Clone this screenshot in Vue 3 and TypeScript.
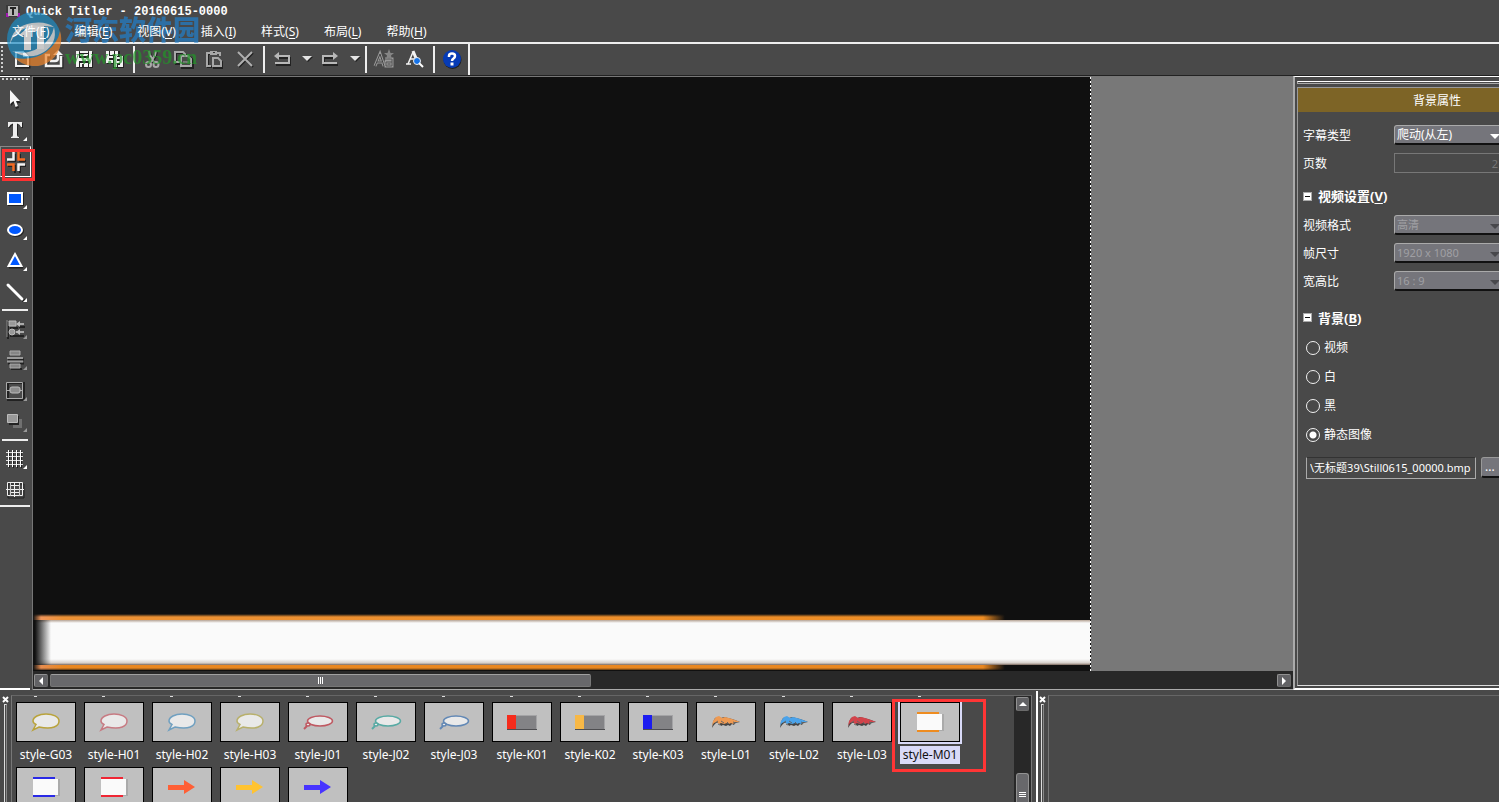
<script setup lang="ts">
import { onMounted, ref } from 'vue'

interface Menu { label: string; key: string }
interface Tool { name: string; icon: string; more?: boolean; off?: boolean }
interface Style { name: string; kind: 'bubble' | 'callout' | 'bar' | 'brush' | 'frame' | 'arrow'; color: string }

const menus: Menu[] = [
  { label: '文件', key: 'F' },
  { label: '编辑', key: 'E' },
  { label: '视图', key: 'V' },
  { label: '插入', key: 'I' },
  { label: '样式', key: 'S' },
  { label: '布局', key: 'L' },
  { label: '帮助', key: 'H' },
]

const caret = '<path d="M2 8h10l-5 5z" fill="#222"/><path d="M1 7h10l-5 5z" fill="#e4e4e4"/>'

const toolbar: Tool[][] = [
  [
    { name: '新建', icon: '<path d="M4 3h8l4 4v10H4z" fill="none" stroke="#222" stroke-width="3" transform="translate(1 1)"/><path d="M4 3h7l5 5v9H4z" fill="#4b4b4b" stroke="#f2f2f2" stroke-width="2"/><path d="M11 2l6 6h-6z" fill="#f2f2f2"/>' },
    { name: '打开', icon: '<path d="M7 7H3v10h15V7" fill="none" stroke="#222" stroke-width="3" transform="translate(1 1)"/><path d="M7 6H3v11h15V7" fill="none" stroke="#f2f2f2" stroke-width="2.500"/><path d="M7 12h5q3 0 3-3V5" fill="none" stroke="#f2f2f2" stroke-width="2.500"/><path d="M10 6l5-5 5 5z" fill="#f2f2f2"/>' },
    { name: '保存', icon: '<path d="M3 3h16v16H3z" fill="#222"/><path d="M2 2h3v16H2zM15 2h3v16h-3zM2 9h16v3H2zM6 2h8v2H6zM6 5h8v2H6zM6 14h8v4H6z" fill="#f2f2f2"/><path d="M8 15h2v3H8z" fill="#333"/>' },
    { name: '另存为', icon: '<path d="M2 2h13v13H2z" fill="#222"/><path d="M1 2h3v12H1zM10 2h3v6h-3zM1 7h9v2H1zM5 2h4v4H5zM4 11h4v3H4z" fill="#f2f2f2"/><path d="M8 7h11v12H8z" fill="#222"/><path d="M9 7h3v11H9zM15 7h3v11h-3zM9 12h9v2H9zM12 8h3v2h-3zM13 16h2v2h-2z" fill="#f2f2f2"/>' },
  ],
  [
    { name: '剪切', icon: '<path d="M8 3l1 4 4 7M15 3l-1 4-4 7" fill="none" stroke="#222" stroke-width="2"/><path d="M7 2l1 4 4 7M14 2l-1 4-4 7" fill="none" stroke="#aaa" stroke-width="2"/><circle cx="6.500" cy="15.500" r="2.500" fill="none" stroke="#aaa" stroke-width="2"/><circle cx="14" cy="15.500" r="2.500" fill="none" stroke="#aaa" stroke-width="2"/>' },
    { name: '复制', icon: '<path d="M3 4h8l2 2v9H3zM9 8h8l3 3v8H9z" fill="none" stroke="#222" stroke-width="2"/><path d="M2 3h8l2 2v8H2z" fill="none" stroke="#a8a8a8" stroke-width="2"/><path d="M8 7h7l3 3v7H8z" fill="#494949" stroke="#a8a8a8" stroke-width="2"/><path d="M10 13h6" stroke="#777" stroke-width="2"/>' },
    { name: '粘贴', icon: '<g transform="translate(-1 0)"><path d="M9 18H5V5h3M11 10h5l3 3v6h-8z" fill="none" stroke="#222" stroke-width="2"/><path d="M8 17H4V4h3M14 4h3v3" fill="none" stroke="#a8a8a8" stroke-width="2"/><path d="M7 2h7v4H7z" fill="#a8a8a8"/><path d="M10 3h2v1h-2z" fill="#333"/><path d="M10 9h5l3 3v5h-8z" fill="#494949" stroke="#a8a8a8" stroke-width="2"/></g>' },
    { name: '删除', icon: '<path d="M4 4l14 14M18 4L4 18" stroke="#222" stroke-width="2"/><path d="M3 3l14 14M17 3L3 17" stroke="#b0b0b0" stroke-width="2"/>' },
  ],
  [
    { name: '撤消', icon: '<path d="M5 9h13v7H4" fill="none" stroke="#222" stroke-width="2"/><path d="M5 7h12v7H3" fill="none" stroke="#b8b8b8" stroke-width="2"/><path d="M7 3v8L2 7z" fill="#b8b8b8"/>' },
    { name: '撤消列表', icon: caret },
    { name: '恢复', icon: '<path d="M15 9H4v7h14" fill="none" stroke="#222" stroke-width="2"/><path d="M15 7H3v7h14" fill="none" stroke="#b8b8b8" stroke-width="2"/><path d="M13 3v8l5-4z" fill="#b8b8b8"/>' },
    { name: '恢复列表', icon: caret },
  ],
  [
    { name: '字体样式', icon: '<path d="M1 17L6 5l4 12M3 13h5" fill="none" stroke="#999" stroke-width="3"/><path d="M1 17L6 5l4 12M3 13h5" fill="none" stroke="#444" stroke-width="1"/><path d="M11 10h7v7h-6v-4h6" fill="none" stroke="#999" stroke-width="3"/><path d="M11 10h7v7h-6v-4h6" fill="none" stroke="#555" stroke-width="1"/><path d="M15 0l1.500 4H20l-3 2.500 1 4-3-2-3 2 1-4L10 4h3.500z" fill="#858585"/>' },
    { name: '预览', icon: '<path d="M3 15L8 3M5 10h6" fill="none" stroke="#f4f4f4" stroke-width="1.500"/><path d="M8 2l5 12" stroke="#f4f4f4" stroke-width="3"/><path d="M1 15h5" stroke="#f4f4f4" stroke-width="1.500"/><circle cx="12" cy="12" r="3.500" fill="#1673e8" stroke="#eee"/><path d="M14 14l4 4" stroke="#fff" stroke-width="2"/>' },
  ],
  [
    { name: '帮助', icon: '<circle cx="10.500" cy="11" r="9" fill="#202020"/><circle cx="10" cy="10" r="9" fill="#063bb5"/><path d="M7 8V7q0-2.500 3-2.500T13 7q0 1.500-1.500 2.500T10 12" fill="none" stroke="#fff" stroke-width="2.500"/><path d="M8.500 13.500h3v3h-3z" fill="#fff"/>' },
  ],
]

const tools: Tool[][] = [
  [
    { name: '选择', icon: '<path d="M6 2v14l3-3 2 6 3-1-2-5h4z" fill="#222"/><path d="M5 0v14l3.500-3 2 6 2.500-1-2-5H15z" fill="#f6f6f6"/>' },
    { name: '文字', more: true, icon: '<path d="M4 2h14v5h-1q-1-3-4-3v11l2 2H7l2-2V4Q6 4 5 7H4z" fill="#222"/><path d="M3 1h14v5h-1q-1-3-4-3.500V14q0 2 2 2v1H6v-1q2 0 2-2V2.500Q5 3 4 6H3z" fill="#eee"/>' },
    { name: '图像', icon: '<path d="M2 9h7V2M20 14h-6v7M20 9h-6V2M2 14h7v7" fill="none" stroke="#222" stroke-width="2"/><path d="M1 7.500h6.500V0M19 12.500h-6.500V19" fill="none" stroke="#f4f4f4" stroke-width="2.500"/><path d="M19 7.500h-6.500V0M1 12.500h6.500V19" fill="none" stroke="#f46a22" stroke-width="2.500"/>' },
  ],
  [
    { name: '矩形', more: true, icon: '<path d="M3 4h16v13H3z" fill="#222"/><path d="M3 4h14v11H3z" fill="#0058ff" stroke="#fff" stroke-width="2"/>' },
    { name: '椭圆', more: true, icon: '<ellipse cx="11" cy="11" rx="8" ry="6" fill="#222"/><ellipse cx="10" cy="10" rx="7" ry="5" fill="#0058ff" stroke="#fff" stroke-width="2"/>' },
    { name: '三角形', more: true, icon: '<path d="M11 4l7 13H4z" fill="#222" stroke="#222"/><path d="M10 3l6.500 12h-13z" fill="#0058ff" stroke="#fff" stroke-width="2"/>' },
    { name: '直线', more: true, icon: '<path d="M4 4l15 15" stroke="#111" stroke-width="3"/><path d="M3 3l14 14" stroke="#fff" stroke-width="3" stroke-linecap="round"/>' },
  ],
  [
    { name: '对齐', more: true, off: true, icon: '<path d="M3 3v17M5 9h8M5 17h14M14 8h6" stroke="#222" stroke-width="2"/><path d="M2 1v17" stroke="#888"/><path d="M14 5h5M11 13h8" stroke="#aaa" stroke-width="2"/><path d="M4 2h7v5H4z" fill="#999" stroke="#bbb"/><circle cx="7" cy="13" r="3" fill="#999" stroke="#bbb"/><path d="M15 2v6l-4-3zM15 10v6l-4-3z" fill="#bbb"/>' },
    { name: '分布', more: true, off: true, icon: '<path d="M3 9.500h16M3 13.500h16M6 19h11" stroke="#222" stroke-width="2"/><path d="M2 8h16M2 11.500h16" stroke="#999" stroke-width="2"/><path d="M5 1h10v4H5zM5 14h10v4H5z" fill="#858585" stroke="#aaa"/>' },
    { name: '居中', more: true, off: true, icon: '<path d="M3 2h16v17H3z" fill="none" stroke="#222" stroke-width="2"/><path d="M1.500 1.500h16v16h-16zM2 9.500h16" fill="none" stroke="#aaa"/><rect x="5" y="6" width="10" height="6" rx="2" fill="#8c8c8c" stroke="#bbb"/>' },
    { name: '顺序', more: true, off: true, icon: '<path d="M8 7h9v9H8z" fill="#707070"/><path d="M4 4h10v9H4z" fill="#222"/><path d="M2.500 2.500h10v8h-10z" fill="#999" stroke="#bbb"/>' },
  ],
  [
    { name: '网格', more: true, icon: '<path d="M4.500 2v17M8.500 2v17M12.500 2v17M16.500 2v17" stroke="#222"/><path d="M1 3.500h17M1 7.500h17M1 11.500h17M1 15.500h17" stroke="#ddd"/><path d="M3.500 1v17M7.500 1v17M11.500 1v17M15.500 1v17" stroke="#fff"/>' },
    { name: '安全区', icon: '<path d="M3 4h16v14H3z" fill="none" stroke="#222"/><path d="M2.500 2.500h15v13h-15zM5.500 5.500h9v7h-9zM1 9.500h18M9.500 2v15" fill="none" stroke="#f0f0f0"/><path d="M5.500 3v13M14.500 3v13" stroke="#ccc"/>' },
  ],
]

const styles: Style[] = [
  { name: 'style-G03', kind: 'bubble', color: '#b9a33c' },
  { name: 'style-H01', kind: 'bubble', color: '#c77b83' },
  { name: 'style-H02', kind: 'bubble', color: '#70a0c0' },
  { name: 'style-H03', kind: 'bubble', color: '#b8b06c' },
  { name: 'style-J01', kind: 'callout', color: '#bf5962' },
  { name: 'style-J02', kind: 'callout', color: '#58aaa4' },
  { name: 'style-J03', kind: 'callout', color: '#6288b5' },
  { name: 'style-K01', kind: 'bar', color: '#f52c1c' },
  { name: 'style-K02', kind: 'bar', color: '#f7b846' },
  { name: 'style-K03', kind: 'bar', color: '#1c1cf0' },
  { name: 'style-L01', kind: 'brush', color: '#ee9a53' },
  { name: 'style-L02', kind: 'brush', color: '#4ba3ea' },
  { name: 'style-L03', kind: 'brush', color: '#d2444b' },
  { name: 'style-M01', kind: 'frame', color: '#ee8c20' },
  { name: '', kind: 'frame', color: '#2929e6' },
  { name: '', kind: 'frame', color: '#ef2634' },
  { name: '', kind: 'arrow', color: '#ff5f35' },
  { name: '', kind: 'arrow', color: '#ffc331' },
  { name: '', kind: 'arrow', color: '#4834ff' },
]
const selected = ref('style-M01')

const videoRows = [
  { id: 'format', label: '视频格式', value: '高清' },
  { id: 'frame', label: '帧尺寸', value: '1920 x 1080' },
  { id: 'aspect', label: '宽高比', value: '16 : 9' },
]
const backgrounds = ['视频', '白', '黑', '静态图像']
const background = ref('静态图像')
const pages = ref('2')
const file = ref('育\\无标题39\\Still0615_00000.bmp')
const fileBox = ref<HTMLInputElement | null>(null)

// Show the end of the path, where the file name is.
onMounted(() => {
  if (fileBox.value) fileBox.value.scrollLeft = fileBox.value.scrollWidth
})
</script>

<template>
  <div class="app">
    <header class="title">
      <svg class="app-icon" viewBox="0 0 14 12"><path d="M0 0h14v12H0z" fill="#3a3a3a" /><path d="M0 8h3v4H0zM11 8h3v4h-3z" fill="#a01ab0" /><path d="M2 1h10v10H2z" fill="#b5b5b5" /><path d="M4 2h6v2H8v6H6V4H4z" fill="#222" /></svg>
      <h1>Quick Titler - 20160615-0000</h1>
    </header>
    <nav class="menu">
      <button v-for="m in menus" :key="m.key" type="button">{{ m.label }}(<u>{{ m.key }}</u>)</button>
    </nav>
    <div class="toolbar" role="toolbar">
      <i class="grip-v"></i>
      <div v-for="(g, i) in toolbar" :key="i" class="group">
        <button v-for="t in g" :key="t.name" type="button" :class="{ drop: t.name.endsWith('列表') }" :aria-label="t.name">
          <svg :viewBox="t.name.endsWith('列表') ? '0 0 10 20' : '0 0 20 20'" v-html="t.icon"></svg>
        </button>
      </div>
    </div>

    <main class="work">
      <aside class="tools">
        <i class="grip-h"></i>
        <div v-for="(g, i) in tools" :key="i" class="tool-group">
          <button v-for="t in g" :key="t.name" type="button" :class="{ active: t.name === '图像' }" :aria-label="t.name">
            <svg viewBox="0 0 20 20" v-html="t.icon"></svg>
            <span v-if="t.more" class="more" :class="{ off: t.off }"></span>
          </button>
        </div>
      </aside>

      <section class="editor">
        <div class="view">
          <div class="stage">
            <div class="ticker">
              <div class="rule top"></div>
              <div class="band"></div>
              <div class="rule bottom"></div>
            </div>
          </div>
          <div class="outside"></div>
        </div>
        <div class="hscroll">
          <button type="button" class="sbtn" aria-label="向左"><svg viewBox="0 0 12 12"><path d="M8 2v8L4 6z" fill="#fff" /></svg></button>
          <div class="htrack"><div class="hthumb"><i></i><i></i><i></i></div></div>
          <button type="button" class="sbtn" aria-label="向右"><svg viewBox="0 0 12 12"><path d="M4 2v8l4-4z" fill="#fff" /></svg></button>
        </div>
      </section>

      <aside class="props">
        <i class="prop-grip"></i>
        <div class="sheet">
          <h2>背景属性</h2>
          <form @submit.prevent>
            <div class="row">
              <label for="kind">字幕类型</label>
              <span class="pick"><select id="kind"><option>爬动(从左)</option></select><i></i></span>
            </div>
            <div class="row">
              <label for="pages">页数</label>
              <input id="pages" v-model="pages" class="pages" disabled />
            </div>
            <h3><i></i>视频设置(<u>V</u>)</h3>
            <div v-for="r in videoRows" :key="r.id" class="row">
              <label :for="r.id">{{ r.label }}</label>
              <span class="pick disabled"><select :id="r.id" disabled><option>{{ r.value }}</option></select><i></i></span>
            </div>
            <h3 class="second"><i></i>背景(<u>B</u>)</h3>
            <label v-for="b in backgrounds" :key="b" class="radio">
              <input v-model="background" type="radio" name="background" :value="b" />{{ b }}
            </label>
            <div class="file">
              <input ref="fileBox" v-model="file" aria-label="图像文件" />
              <button type="button">...</button>
            </div>
          </form>
        </div>
      </aside>
    </main>

    <footer class="docks">
      <section class="dock styles">
        <div class="handle">
          <button type="button" aria-label="关闭"><svg viewBox="0 0 7 7"><path d="M1 1l5 5M6 1L1 6" stroke="#fff" stroke-width="2" /></svg></button>
          <i></i>
        </div>
        <div class="shelf">
          <div class="tails"><i v-for="n in 14" :key="n"></i></div>
          <div class="grid">
            <button v-for="(s, i) in styles" :key="i" type="button" class="cell" :class="{ selected: s.name === selected }" @click="selected = s.name">
              <span class="thumb">
                <svg viewBox="0 0 58 38">
                  <g v-if="s.kind === 'bubble'" :stroke="s.color" fill="#e9e9e9" stroke-width="1.5">
                    <path d="M19 21.500l-3 5.500 6-3c14 3 20-1 20-6 0-4.500-6-7-13-7s-13 3-13 7q0 2 3 3.500z" />
                  </g>
                  <g v-else-if="s.kind === 'callout'" :stroke="s.color" fill="#e9e9e9" stroke-width="1.5">
                    <ellipse cx="31" cy="18" rx="12.500" ry="5" />
                    <ellipse cx="19" cy="21.500" rx="2" ry="1.500" />
                    <path d="M15 26l3-3" stroke-width="2" />
                  </g>
                  <g v-else-if="s.kind === 'bar'">
                    <path d="M14 12h30v15H14z" fill="#838386" />
                    <path d="M14 12h9v14h-9z" :fill="s.color" />
                    <path d="M14 26h30v1H14z" fill="#4d4d50" />
                    <path d="M43 12h1v14h-1zM23 12h20v1H23z" fill="#a4a4a6" />
                  </g>
                  <g v-else-if="s.kind === 'brush'">
                    <path d="M15 25l1-6 2-4 3-1 3 1 3-1 4 1 4 1 3 1 5 2-5 1-1 2-2-1-2 2-2-1-2 1-3-1-2 1-2-3-3 0-2 2z" fill="#444" />
                    <path d="M15 24l1-6 3-4 3-1 3 2 3-1 4 1 3 1 3 1 5 2-5 0-2 2-2-1-2 1-2-1-3 1-3-1-2 1-2-2-3 1-2 3z" :fill="s.color" />
                    <path d="M18 20l3-2M24 18l3 2M30 19l2 2M36 19l3 1M21 21l2 1" stroke="#666" />
                  </g>
                  <g v-else-if="s.kind === 'frame'">
                    <path d="M17 11h26v17H17z" fill="#aaa" />
                    <path d="M16 9h22v20H16z" :fill="s.color" />
                    <path d="M16 11h25v16H16z" fill="#fafafa" />
                  </g>
                  <path v-else d="M15 17h16v-5l11 7-11 7v-4H15z" :fill="s.color" />
                </svg>
              </span>
              <span v-if="s.name" class="name">{{ s.name }}</span>
              <span v-if="s.name === 'style-M01'" class="callout-box"></span>
            </button>
          </div>
        </div>
        <div class="vscroll">
          <button type="button" class="sbtn" aria-label="向上"><svg viewBox="0 0 12 12"><path d="M2 8h8L6 4z" fill="#fff" /></svg></button>
          <div class="vthumb"><i></i><i></i><i></i></div>
        </div>
      </section>
      <section class="dock objects">
        <div class="handle">
          <button type="button" aria-label="关闭"><svg viewBox="0 0 7 7"><path d="M1 1l5 5M6 1L1 6" stroke="#fff" stroke-width="2" /></svg></button>
          <i></i>
        </div>
        <div class="shelf"></div>
      </section>
    </footer>

    <div class="watermark">
      <svg viewBox="0 0 56 56">
        <circle cx="28" cy="28" r="27" fill="#1d8cc4" />
        <path d="M54 20A27 27 0 0 1 9 47q18 3 31-6 12-9 14-21z" fill="#f0852a" />
        <path d="M4 33Q6 15 26 12q14-2 22 4-14-2-24 0Q9 19 4 33z" fill="#e8eef2" />
        <path d="M6 40q14 5 28-4 12-8 14-20 4 16-10 25-14 9-32-1z" fill="#e8eef2" />
        <path d="M25 14L13 24h5v15h7zM25 14l1 6h5v18h7V15z" fill="#fff" />
      </svg>
      <div><strong>河东软件园</strong><span>www.pc0359.cn</span></div>
    </div>
  </div>
</template>

<style>
html, body { margin: 0; overflow: hidden; background: #494949; }
</style>

<style scoped>
.app {
  position: relative;
  display: flex;
  flex-direction: column;
  height: 100vh;
  overflow: hidden;
  background: #494949;
  color: #fff;
  font: 12px/16px "Noto Sans", "Noto Sans CJK SC", sans-serif;
}
.app *, .app *::before, .app *::after { box-sizing: border-box; }
button, input, select { font: inherit; color: inherit; }
button { padding: 0; border: 0; background: none; }
svg { display: block; overflow: visible; }
h1, h2, h3 { margin: 0; font-weight: normal; }
i { font-style: normal; }

.title { display: flex; align-items: center; gap: 6px; height: 22px; padding-left: 6px; flex: none; }
.app-icon { width: 14px; height: 12px; }
h1 { padding-top: 1px; font: bold 12px/16px "Liberation Mono", monospace; }

.menu { position: relative; z-index: 2; display: flex; gap: 25px; height: 20px; padding-left: 12px; flex: none; }
.menu button { line-height: 20px; white-space: nowrap; }
u { text-underline-offset: 2px; }

.toolbar { display: flex; height: 34px; flex: none; border-top: 2px solid #eee; border-bottom: 1px solid #222; }
.grip-v { width: 2px; margin: 2px 3px 2px 1px; background: repeating-linear-gradient(#ccc 0 2px, transparent 2px 4px); }
.group { display: flex; align-items: center; }
.group::after { content: ""; width: 2px; height: 27px; margin: 0 1px 0 3px; background: #eee; }
.group:last-child::after { height: 31px; margin-left: 1px; }
.group button { display: grid; place-items: center; width: 31px; height: 31px; padding-bottom: 2px; }
.group button svg { width: 20px; height: 20px; }
.group .drop { width: 17px; }
.group .drop svg { width: 10px; }

.work { display: flex; flex: 1; min-height: 0; }
.tools { display: flex; flex-direction: column; width: 33px; flex: none; padding-right: 2px; border-right: 1px solid #777; }
.grip-h { display: block; height: 8px; flex: none; border-top: 1px solid #fff; background: repeating-linear-gradient(90deg, #ccc 0 2px, transparent 2px 4px) 2px 1px / 26px 2px no-repeat; }
.tools::after { content: ""; flex: 1; border-bottom: 2px solid #fff; }
.tool-group::after { content: ""; display: block; height: 2px; margin: 2px 2px 2px; background: #eee; }
.tool-group:last-child::after { margin: 0; }
.tools button { position: relative; display: grid; place-items: center; width: 31px; height: 31px; padding-right: 2px; }
.tools button svg { width: 20px; height: 20px; }
.more { position: absolute; right: 4px; bottom: 5px; border: 2px solid #fff; border-top-color: transparent; border-left-color: transparent; }
.more.off { border-right-color: #999; border-bottom-color: #999; }
.tools .active { border: 1px solid #fff; border-left-color: #888; border-top-color: #888; padding-right: 0; }
.active::after { content: ""; position: absolute; inset: 2px -5px -5px 1px; border: 3px solid #ff3131; z-index: 2; }

.editor { display: flex; flex-direction: column; flex: 1; min-width: 0; border-top: 1px solid #777; border-bottom: 1px solid #aaa; }
.view { display: flex; flex: 1; min-height: 0; }
.stage { flex: 1; display: flex; flex-direction: column; justify-content: flex-end; padding-bottom: 1px; background: #101010; }
.outside { position: relative; width: 202px; flex: none; background: #787878; }
.outside::before { content: ""; position: absolute; inset: 0 auto 0 -1px; width: 1px; background: repeating-linear-gradient(#fff 0 2px, #111 2px 4px); }
.rule { width: 100%; }
.rule.top { height: 6px; background: linear-gradient(90deg, #c66f3b00, #f0965a 8px, #ed9236 30px, #ee8d24 calc(100% - 108px), transparent calc(100% - 86px)); -webkit-mask-image: linear-gradient(transparent, #000 50%); mask-image: linear-gradient(transparent, #000 50%); }
.rule.bottom { height: 5px; background: linear-gradient(90deg, #c66f3b00, #e88d50 8px, #e98720 30px, #e98720 calc(100% - 108px), transparent calc(100% - 86px)); -webkit-mask-image: linear-gradient(#000 60%, transparent 120%); mask-image: linear-gradient(#000 60%, transparent 120%); }
.band {
  height: 45px;
  background:
    linear-gradient(90deg, #101010 2px, #10101000 18px),
    linear-gradient(#b5a395 0, #fafafa 3px, #fafafa 39px, #d5cec8 43px, #7a675c 45px);
}

.hscroll { display: flex; align-items: center; height: 18px; padding: 1px 2px 0 1px; background: #282828; flex: none; }
.sbtn { display: grid; place-items: center; width: 14px; height: 13px; flex: none; border: 1px solid #929292; border-right-color: #6b6b6b; border-bottom-color: #6b6b6b; border-radius: 2px; background: #626265; }
.sbtn svg { width: 12px; height: 12px; }
.htrack { flex: 1; padding: 0 2px; }
.hthumb { display: flex; justify-content: center; align-items: center; gap: 1px; width: 44.2%; height: 13px; border: 1px solid #777; border-top-color: #a0a0a0; border-radius: 2px; background: #68686b; }
.hthumb i { width: 1px; height: 7px; background: #fff; }

.props { display: flex; flex-direction: column; width: 206px; flex: none; padding: 4px 0 2px 2px; border-left: 2px solid #aaa; border-top: 1px solid #fff; border-bottom: 2px solid #fff; overflow: hidden; }
.prop-grip { display: block; height: 3px; margin-bottom: 3px; flex: none; border: 1px solid #aaa; border-top-color: #fff; border-right: 0; }
.sheet { width: 280px; flex: 1; border: 1px solid #999; border-bottom-color: #ddd; }
h2 { height: 24px; background: #7d6426; text-align: center; font-size: 12px; line-height: 26px; }
form { padding: 9px 0 0 5px; }
.row { display: flex; align-items: center; height: 28px; }
.row label { width: 91px; padding-top: 1px; flex: none; }
.pick { position: relative; display: block; width: 109px; height: 20px; }
.pick select { appearance: none; width: 100%; height: 20px; margin: 0; padding: 1px 0 0 2px; border: 1px solid #aaa; border-bottom: 2px solid #111; border-radius: 3px; background: #75757b; opacity: 1; display: block; }
.pick i { position: absolute; right: 3px; top: 9px; border: 5px solid transparent; border-top-color: #fff; border-bottom: 0; }
.pick.disabled select { color: #a0a0a4; font-size: 11px; }
.pick.disabled i { border-top-color: #48484c; }
.pages { width: 109px; height: 20px; padding: 0 4px 0 0; border: 1px solid #777; background: transparent; color: #777; text-align: right; font-size: 11px; }
h3 { display: flex; align-items: center; height: 34px; padding-top: 4px; font-size: 13px; font-weight: bold; }
h3.second { margin-top: 4px; padding-top: 3px; }
h3 i { display: grid; place-items: center; width: 9px; height: 9px; margin-right: 6px; border: 1px solid #aaa; background: #fff; }
h3 i::after { content: ""; width: 5px; height: 1px; background: #111; }
.radio { display: flex; align-items: center; gap: 4px; height: 29px; padding-left: 3px; }
.radio input { appearance: none; width: 14px; height: 14px; margin: 0; border: 1px solid #f2f2f2; border-radius: 50%; }
.radio input:checked { background: radial-gradient(#fff 0 3px, transparent 4px); }
.file { display: flex; gap: 5px; margin-top: 8px; padding-left: 3px; }
.file input { width: 170px; height: 22px; padding: 0 4px 2px 3px; border: 1px solid #aaa; border-top-color: #333; background: transparent; font-size: 11px; }
.file button { width: 22px; height: 21px; border: 1px solid #999; border-bottom: 2px solid #111; border-radius: 3px; background: #75757b; text-align: left; padding-left: 3px; }

.docks { display: flex; height: 112px; flex: none; padding-top: 1px; }
.dock { display: flex; min-width: 0; padding-top: 4px; }
.styles { flex: 1; padding-right: 4px; border-right: 2px solid #fff; }
.objects { width: 461px; flex: none; }
.handle { display: flex; flex-direction: column; align-items: center; width: 9px; flex: none; padding: 1px 0 0 1px; margin-right: 2px; }
.handle button { width: 7px; height: 7px; flex: none; }
.handle svg { width: 7px; height: 7px; }
.handle i { flex: 1; width: 3px; margin-top: 1px; border: 1px solid #ddd; border-bottom: 0; border-right-color: #888; }
.objects .handle { width: 8px; }
.shelf { flex: 1; min-width: 0; padding-left: 4px; border-left: 1px solid #777; border-top: 1px solid #666; }
.styles .shelf { height: 107px; }
.tails { display: flex; gap: 8px; height: 6px; }
.tails i { width: 60px; height: 1px; background: linear-gradient(#ddd, #ddd) 18px 0 / 3px 1px no-repeat; }
.grid { display: grid; grid-template-columns: repeat(auto-fill, 60px); grid-auto-rows: 65px; column-gap: 8px; height: 100px; clip-path: inset(-6px -30px 0 -10px); }
.cell { position: relative; display: flex; flex-direction: column; align-items: center; gap: 4px; }
.thumb { width: 60px; height: 40px; flex: none; border: 1px solid #000; background: #c0c0c0; }
.thumb svg { width: 58px; height: 38px; }
.name { width: 60px; height: 18px; line-height: 17px; white-space: nowrap; text-align: center; }
.selected .thumb { box-shadow: 0 0 0 2px #d9daf8; }
.selected .name { background: #d9daf8; color: #111; }
.callout-box { position: absolute; left: -8px; top: -3px; width: 94px; height: 73px; border: 3px solid #ff3535; }
.vscroll { display: flex; flex-direction: column; justify-content: space-between; align-items: center; width: 18px; height: 107px; padding-top: 1px; background: #282828; border-top: 1px solid #666; border-right: 1px solid #777; flex: none; }
.vscroll .sbtn { height: 14px; width: 13px; }
.vthumb { display: flex; flex-direction: column; align-items: center; justify-content: flex-end; gap: 1px; width: 13px; height: 29px; padding-bottom: 5px; border: 1px solid #929292; border-bottom: 0; border-radius: 3px 3px 0 0; background: #68686b; }
.vthumb i { width: 7px; height: 1px; background: #fff; }

.watermark { position: absolute; z-index: 1; left: 6px; top: 11px; display: flex; align-items: center; gap: 3px; opacity: 0.7; pointer-events: none; }
.watermark svg { width: 56px; height: 56px; }
.watermark strong { display: block; font: 900 27px/36px "Noto Sans CJK SC", sans-serif; color: #2080cc; white-space: nowrap; }
.watermark span { display: block; font: bold 20px/20px "Liberation Serif", serif; color: #229628; }
</style>
